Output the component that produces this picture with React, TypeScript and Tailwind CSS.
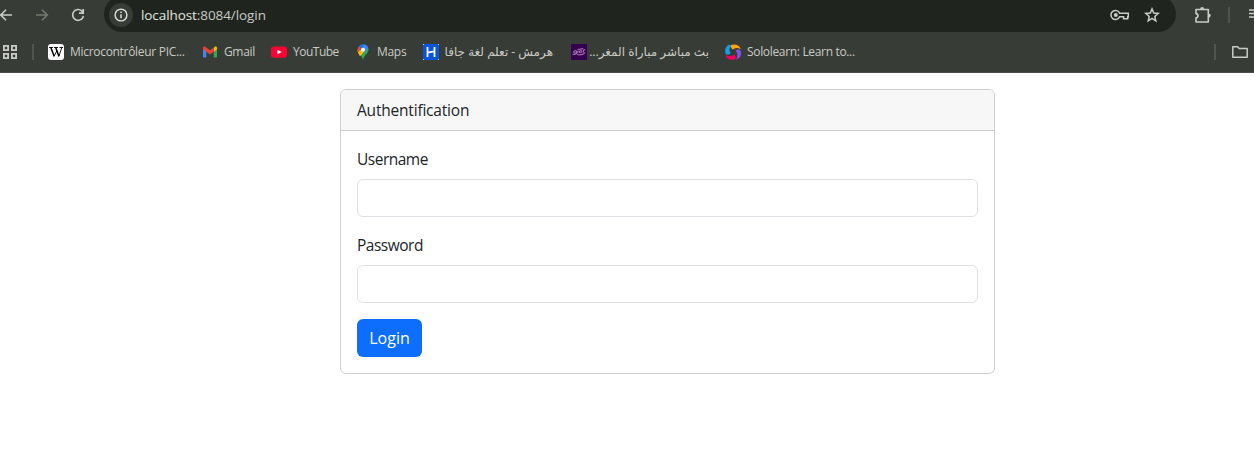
import type { ReactNode } from "react";

function BackIcon() {
  return (
    <svg className="size-4 shrink-0" viewBox="0 0 16 16" fill="none" stroke="currentColor" strokeWidth="1.6">
      <path d="M15 8H4M9 2.7 3.7 8 9 13.3" />
    </svg>
  );
}

function ForwardIcon() {
  return (
    <svg className="size-4 shrink-0" viewBox="0 0 16 16" fill="none" stroke="currentColor" strokeWidth="1.6">
      <path d="M2 8h11M8 2.7 13.3 8 8 13.3" />
    </svg>
  );
}

function ReloadIcon() {
  return (
    <svg className="size-4 shrink-0" viewBox="0 0 16 16" fill="none" stroke="currentColor" strokeWidth="1.7">
      <path d="M13.4 8.8A5.4 5.4 0 1 1 12 4.2L13.2 5.5" />
      <path d="M13.2 2v4.2H9" />
    </svg>
  );
}

function InfoIcon() {
  return (
    <svg className="size-4" viewBox="0 0 16 16" fill="none" stroke="currentColor" strokeWidth="1.4">
      <circle cx="8" cy="8" r="5.9" />
      <path d="M8 7.2v4M8 4.6v1.5" />
    </svg>
  );
}

function KeyIcon() {
  return (
    <svg className="h-4 w-5" viewBox="0 0 20 16" fill="none" stroke="currentColor" strokeWidth="1.5">
      <path d="M9.6 6.2h8.7v3.6h-.6v2h-4.1v-2h-4A4.5 4.5 0 1 1 9.6 6.2Z" />
      <circle cx="5.8" cy="8" r="2" fill="currentColor" stroke="none" />
    </svg>
  );
}

function StarIcon() {
  return (
    <svg className="size-4" viewBox="0 0 16 16" fill="none" stroke="currentColor" strokeWidth="1.5">
      <path d="m8 1.9 1.7 4.1 4.5.4-3.4 3 1 4.4L8 11.4 4.2 13.8l1-4.4-3.4-3 4.5-.4L8 1.9Z" />
    </svg>
  );
}

function ExtensionIcon() {
  return (
    <svg className="h-[18px] w-[18px]" viewBox="0 0 18 18" fill="none" stroke="currentColor" strokeWidth="1.6">
      <path d="M2 3.5h12.3V16H2v-4.1c2.6-.2 2.6-4.1 0-4.3V3.5Z" strokeLinejoin="round" />
      <path d="M6.2 3a1.9 1.9 0 0 1 3.8 0ZM15 7.8a1.8 1.8 0 0 1 0 3.6Z" fill="currentColor" stroke="none" />
    </svg>
  );
}

function AppsIcon() {
  return (
    <svg className="h-4 w-4" viewBox="0 0 16 16" fill="none" stroke="currentColor" strokeWidth="1.8">
      <path d="M1.9 1.9h4.2v4.2H1.9zM9.9 1.9h4.2v4.2H9.9zM1.9 9.9h4.2v4.2H1.9zM9.9 9.9h4.2v4.2H9.9z" />
    </svg>
  );
}

function WikiIcon() {
  return (
    <span className="flex size-4 items-center justify-center rounded-[3px] bg-white">
      <svg className="size-4" viewBox="0 0 16 16" fill="none" stroke="#000">
        <path d="M1 3.5h4M6 3.5h4M11.5 3.5H15" strokeWidth=".9" />
        <path d="m2.8 3.5 3.4 8.8M7.7 3.5l3.2 8.8" strokeWidth="1.5" />
        <path d="m6 12.5 3-6M10.8 12.5l3-9" strokeWidth=".9" />
      </svg>
    </span>
  );
}

function GmailIcon() {
  return (
    <svg className="size-4" viewBox="0 0 16 16">
      <path d="M1 4.5v8c0 .6.4 1 1 1h2.3V7Z" fill="#4285f4" />
      <path d="M15 4.5v8c0 .6-.4 1-1 1h-2.3V7Z" fill="#34a853" />
      <path d="M11.7 4v3.8L15 5.3V4c0-1.4-1.5-2-2.5-1Z" fill="#fbbc04" />
      <path d="M1 4c0-1.4 1.5-2 2.5-1L8 6.3 11.7 3.5v4.2L8 10.5 1 5.3Z" fill="#ea4335" />
    </svg>
  );
}

function YouTubeIcon() {
  return (
    <svg className="size-4" viewBox="0 0 16 16">
      <rect y="2.4" width="16" height="11.4" rx="3" fill="#ff0033" />
      <path d="m6.4 5.8 4.3 2.3-4.3 2.4Z" fill="#fff" />
    </svg>
  );
}

function MapsIcon() {
  return (
    <svg className="size-4" viewBox="0 0 16 16">
      <path d="M2.5 5.8C2.5 9.4 6.6 10.6 8 16c1.4-5.4 5.5-6.6 5.5-10.2l-.3-1.6Z" fill="#34a853" />
      <path d="M10 7 5 12.2C3.8 10.3 2.5 8.5 2.6 5.8Z" fill="#fbbc04" />
      <path d="M8 .2a5.5 5.5 0 0 1 5.3 4L8.6 9 6 5.8Z" fill="#4285f4" />
      <path d="M3.8 2.2A5.5 5.5 0 0 1 9.5.5L6.4 5.2Z" fill="#1a73e8" />
      <path d="M3.8 2.2 6.6 4.6 3 8.3C2.3 6.2 2.3 4 3.8 2.2Z" fill="#ea4335" />
      <circle cx="8" cy="5.7" r="2" fill="#fff" />
    </svg>
  );
}

function HIcon() {
  return (
    <svg className="size-4" viewBox="0 0 16 16">
      <rect width="16" height="16" fill="#0755d8" />
      <path d="M4.5 3v10M11.5 3v10M4.5 8.6l7-1.2" stroke="#fff" strokeWidth="1.8" />
      <path d="M0 0h1v1H0zM15 0h1v1h-1zM0 15h1v1H0zM15 15h1v1h-1z" fill="#b8cdf0" />
    </svg>
  );
}

function PurpleIcon() {
  return (
    <svg className="size-4" viewBox="0 0 16 16">
      <rect width="16" height="16" fill="#35004f" />
      <g fill="none" stroke="#a86bb5" strokeWidth="1.1">
        <path d="M1.5 10.2c2 .8 3.8 0 5-2l1-1.5M2.5 8.2c1.2-2.5 4.2-1.5 2.8.2-1.2 1-2.2.8-2.8-.2ZM6 10.5c3 .8 6.5 0 8.3-1.8" />
        <path d="M8 8.2c.6-1.8 2.4-2 2.8-.8.4 1.2-1.6 2-2.8.8ZM6.5 5.5l5.8-.9M12.5 8.6V6.2l1.8-.8" />
      </g>
    </svg>
  );
}

function SololearnIcon() {
  return (
    <svg className="size-4" viewBox="0 0 16 16">
      <path d="M5.2 1.5C9-.6 14.6.4 15.8 5.2 12.9 3.6 10 3.7 7.4 5.6 6.6 4.3 5.6 3 5.2 1.5Z" fill="#ffa40b" />
      <path d="M4.7.5C.5 2-1 6.6 1 10.2c1.6.7 3.4.4 4.6-1C3.9 6.9 4 4.6 6 2.6Z" fill="#149ef2" />
      <path d="M.3 10.8c1 4.5 6 6.2 10.3 4.1.4-1.6-.2-3.3-1.4-4.3-2.6 1.8-6 2.2-8.9.2Z" fill="#f20062" />
      <path d="M11.2 15.7c4.9-1.6 6-6.5 3.8-9.9-1.5-.8-3.3-.3-4.5.9 2.3 2.6 2.4 5.8.7 9Z" fill="#8053e8" />
    </svg>
  );
}

function FolderIcon() {
  return (
    <svg className="size-4" viewBox="0 0 16 16" fill="none" stroke="currentColor" strokeWidth="1.5">
      <path d="M.8 2.7h4.8l1.6 1.8h8v8.8H.8V2.7Z" strokeLinejoin="round" />
    </svg>
  );
}

interface Bookmark {
  label: string;
  icon: ReactNode;
  labelClass: string;
  rtl?: boolean;
}

const bookmarks: Bookmark[] = [
  { label: "Microcontrôleur PIC...", icon: <WikiIcon />, labelClass: "w-[132px] tracking-[-0.3px]" },
  { label: "Gmail", icon: <GmailIcon />, labelClass: "w-[47px] tracking-[-0.35px]" },
  { label: "YouTube", icon: <YouTubeIcon />, labelClass: "w-[62px] tracking-[-0.5px]" },
  { label: "Maps", icon: <MapsIcon />, labelClass: "w-[46px] tracking-[-0.3px]" },
  { label: "هرمش - تعلم لغة جافا", icon: <HIcon />, labelClass: "w-[108px] mr-[18px]", rtl: true },
  { label: "بث مباشر مباراة المغر...", icon: <PurpleIcon />, labelClass: "w-[116px] mr-4 tracking-[-0.17px]", rtl: true },
  { label: "Sololearn: Learn to...", icon: <SololearnIcon />, labelClass: "w-[120px] tracking-[-0.33px]" },
];

function BrowserToolbar() {
  return (
    <div className="flex h-8 items-start overflow-hidden">
      <div className="-ml-[3px] flex h-[30px] w-[107px] shrink-0 items-center gap-5 text-[#c9cbc6]">
        <BackIcon />
        <span className="ml-px flex text-[#747970]"><ForwardIcon /></span>
        <ReloadIcon />
      </div>
      <div className="-mt-1 flex h-9 w-[1072px] shrink-0 items-center rounded-full bg-[#20241f] pl-[5px] text-[#e2e4df]">
        <span className="mt-px flex size-6 items-center justify-center rounded-full bg-[#383c36]"><InfoIcon /></span>
        <span className="ml-2 mt-0.5 whitespace-nowrap text-[13.5px] leading-5 tracking-[-0.08px]">
          localhost<span className="text-[#c7c9c4]">:8084/login</span>
        </span>
        <span className="ml-auto mr-4 mt-px flex items-center gap-3.5 text-[#c9cbc6]"><KeyIcon /><StarIcon /></span>
      </div>
      <div className="ml-[18px] flex h-[30px] shrink-0 items-center text-[#c9cbc6]">
        <ExtensionIcon />
        <span className="ml-4 h-4 w-0.5 bg-[#50544d]" />
        <svg className="ml-[18px] h-3 w-4" viewBox="0 0 16 12" fill="none" stroke="currentColor" strokeWidth="1.4">
          <path d="M1 1h15M1 4.5h15M1 8h15" />
        </svg>
      </div>
    </div>
  );
}

function BookmarksBar() {
  return (
    <div className="flex h-10 items-center pl-0.5 text-[#c9cbc6]">
      <AppsIcon />
      <span className="ml-3.5 h-4 w-0.5 bg-[#50544d]" />
      <div className="ml-3.5 flex">
        {bookmarks.map((item) => (
          <div key={item.label} className="flex shrink-0 items-center gap-1.5">
            {item.icon}
            <span dir={item.rtl ? "rtl" : "ltr"} className={`whitespace-nowrap text-[12px] leading-4 ${item.labelClass}`}>
              {item.label}
            </span>
          </div>
        ))}
      </div>
      <span className="ml-auto h-4 w-0.5 bg-[#50544d]" />
      <span className="ml-4 mr-[6px]"><FolderIcon /></span>
    </div>
  );
}

function Field({ id, label, type, labelClass }: { id: string; label: string; type: string; labelClass: string }) {
  return (
    <div className="mb-4 flex flex-col">
      <label htmlFor={id} className={`mb-2 self-start ${labelClass}`}>{label}</label>
      <input id={id} type={type} className="h-[38px] w-full rounded-md border border-[#dee2e6] bg-white px-3 outline-none" />
    </div>
  );
}

export default function App() {
  return (
    <div className="h-[464px] overflow-hidden bg-white font-['Open_Sans','DejaVu_Sans',sans-serif]">
      <header className="h-[73px] border-b border-[#4a4d48] bg-[#383c36]">
        <BrowserToolbar />
        <BookmarksBar />
      </header>
      <main className="ml-[340px] mt-4 w-[655px] text-[15.5px] leading-6 text-[#212529]">
        <section className="h-[285px] rounded-md border border-[#cfcfcf]">
          <h1 className="h-[41px] rounded-t-[5px] border-b border-[#cfcfcf] bg-[#f7f7f7] px-4 py-2 tracking-[-0.2px]">Authentification</h1>
          <form className="p-4" onSubmit={(event) => event.preventDefault()}>
            <Field id="username" label="Username" type="text" labelClass="tracking-[-0.5px]" />
            <Field id="password" label="Password" type="password" labelClass="tracking-[-0.5px]" />
            <button type="submit" className="h-[38px] w-[65px] rounded-md bg-[#0d6efd] text-[16px] text-white">Login</button>
          </form>
        </section>
      </main>
    </div>
  );
}
